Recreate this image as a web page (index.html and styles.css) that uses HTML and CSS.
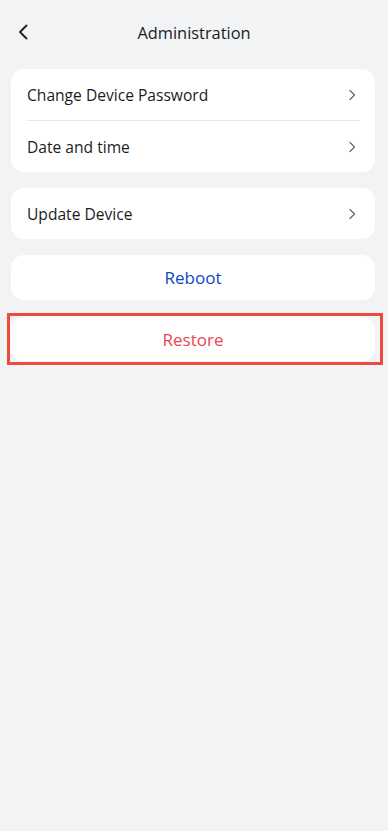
FILE: index.html
```html
<!DOCTYPE html>
<html lang="en">

<head>
    <meta charset="UTF-8">
    <meta name="viewport" content="width=device-width, initial-scale=1.0">
    <title>Administration</title>
    <link rel="stylesheet" href="styles.css">
</head>

<body>
    <div class="page">
        <header class="top-bar">
            <a href="#" class="back-btn">
                <svg width="12" height="16" viewBox="0 0 12 16">
                    <path d="M9.5 1.5 L3 8 L9.5 14.5" fill="none" stroke="#1f1f1f" stroke-width="1.8" stroke-linecap="round" stroke-linejoin="round"/>
                </svg>
            </a>
            <h1 class="title">Administration</h1>
        </header>

        <div class="card">
            <a href="#" class="row">
                <span>Change Device Password</span>
                <svg class="arrow" width="8" height="12" viewBox="0 0 8 12">
                    <path d="M2 1.5 L6.5 6 L2 10.5" fill="none" stroke="#666" stroke-width="1.2" stroke-linecap="round" stroke-linejoin="round"/>
                </svg>
            </a>
            <div class="divider"></div>
            <a href="#" class="row">
                <span>Date and time</span>
                <svg class="arrow" width="8" height="12" viewBox="0 0 8 12">
                    <path d="M2 1.5 L6.5 6 L2 10.5" fill="none" stroke="#666" stroke-width="1.2" stroke-linecap="round" stroke-linejoin="round"/>
                </svg>
            </a>
        </div>

        <div class="card">
            <a href="#" class="row">
                <span>Update Device</span>
                <svg class="arrow" width="8" height="12" viewBox="0 0 8 12">
                    <path d="M2 1.5 L6.5 6 L2 10.5" fill="none" stroke="#666" stroke-width="1.2" stroke-linecap="round" stroke-linejoin="round"/>
                </svg>
            </a>
        </div>

        <button class="action reboot">Reboot</button>

        <!-- 红框高亮 -->
        <div class="highlight">
            <button class="action restore">Restore</button>
        </div>
    </div>
</body>

</html>
```

FILE: styles.css
```css
* {
    box-sizing: border-box;
}

body {
    margin: 0;
    background-color: #f2f3f5;
    font-family: "Open Sans", "Noto Sans", sans-serif;
    color: #1c1c1c;
}

.page {
    padding: 0 13px 0 11px;
}

.top-bar {
    position: relative;
    height: 64px;
    display: flex;
    align-items: center;
    justify-content: center;
    margin-bottom: 5px;
}

.back-btn {
    position: absolute;
    left: 6px;
    top: 24px;
    display: flex;
}

.title {
    margin: 0;
    font-size: 16.4px;
    font-weight: 500;
    color: #1c1c1c;
    padding-left: 2px;
}

.card {
    background-color: #fff;
    border-radius: 13px;
    padding: 0 15px 0 16px;
    margin-bottom: 16px;
}

.row {
    height: 51px;
    display: flex;
    align-items: center;
    justify-content: space-between;
    text-decoration: none;
    color: #1c1c1c;
    font-size: 15.6px;
}

.arrow {
    margin-right: 4px;
}

.divider {
    height: 1px;
    background-color: #e6e6e8;
}

.action {
    display: block;
    width: 100%;
    height: 45px;
    border: none;
    border-radius: 13px;
    background-color: #fff;
    font-family: inherit;
    font-size: 17px;
    cursor: pointer;
    margin-bottom: 13px;
}

.reboot {
    color: #1047c2;
}

.restore {
    color: #e8474a;
    margin-bottom: 0;
    height: 44px;
}

.highlight {
    margin: 0 -8px 0 -4px;
    padding: 1px 5px 1px 1px;
    border: 3px solid #ef4a40;
}
```
